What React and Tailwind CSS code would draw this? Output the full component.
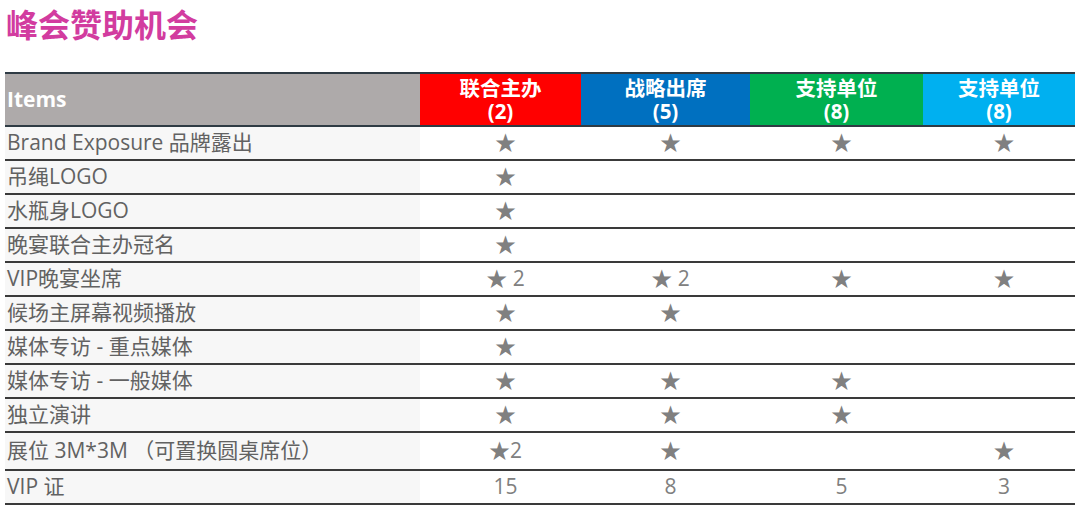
import React from 'react';

const COLS = 'grid grid-cols-[415px_161px_169px_173px_152px]';

const HEADS = [
    { title: '联合主办', count: '(2)', bg: 'bg-[#ff0000]' },
    { title: '战略出席', count: '(5)', bg: 'bg-[#0070c0]' },
    { title: '支持单位', count: '(8)', bg: 'bg-[#00b050]' },
    { title: '支持单位', count: '(8)', bg: 'bg-[#00b0f0]' },
];

const ROWS = [
    { item: 'Brand Exposure 品牌露出', cells: ['★', '★', '★', '★'] },
    { item: '吊绳LOGO', cells: ['★', '', '', ''] },
    { item: '水瓶身LOGO', cells: ['★', '', '', ''] },
    { item: '晚宴联合主办冠名', cells: ['★', '', '', ''] },
    { item: 'VIP晚宴坐席', cells: ['★ 2', '★ 2', '★', '★'] },
    { item: '候场主屏幕视频播放', cells: ['★', '★', '', ''] },
    { item: '媒体专访 - 重点媒体', cells: ['★', '', '', ''] },
    { item: '媒体专访 - 一般媒体', cells: ['★', '★', '★', ''] },
    { item: '独立演讲', cells: ['★', '★', '★', ''] },
    { item: '展位 3M*3M （可置换圆桌席位）', cells: ['★2', '★', '', '★'], tall: true },
    { item: 'VIP 证', cells: ['15', '8', '5', '3'] },
];

export default function App() {
    return (
        <div className="w-[1080px] h-[505px] bg-white overflow-hidden" style={{ fontFamily: '"Open Sans", "Noto Sans CJK SC", sans-serif' }}>
            <h1 className="h-[72px] pl-[6px] text-[32px] font-bold leading-[46px] text-[#d23c9f]" style={{ fontFamily: '"Noto Sans CJK SC", sans-serif' }}>
                峰会赞助机会
            </h1>
            <div className="ml-[5px] w-[1070px]">
                <div className={`${COLS} h-[55px] border-y-2 border-[#2f3b44] text-white font-bold text-[20.5px] leading-[23px]`}>
                    <div className="bg-[#aeaaaa] flex items-center pl-[2px] text-[21px]">Items</div>
                    {HEADS.map((h, i) => (
                        <div key={i} className={`${h.bg} flex flex-col items-center justify-center gap-[1px]`} style={{ fontFamily: '"Noto Sans CJK SC", sans-serif' }}>
                            <span className="block h-[23px]">{h.title}</span>
                            <span className="block h-[23px] font-['Open_Sans'] font-bold">{h.count}</span>
                        </div>
                    ))}
                </div>
                {ROWS.map((r, i) => (
                    <div key={i} className={`${COLS} ${r.tall ? 'h-[38px]' : 'h-[34px]'} border-b-2 border-[#3a3a3a]`}>
                        <div className="bg-[#f7f7f7] flex items-center pl-[2px] text-[21px] text-[#626262] whitespace-nowrap">
                            {r.item}
                        </div>
                        {r.cells.map((c, j) => (
                            <div key={j} className="flex items-center justify-center pl-[10px] text-[21px] text-[#808080]">
                                {c}
                            </div>
                        ))}
                    </div>
                ))}
            </div>
        </div>
    );
}
